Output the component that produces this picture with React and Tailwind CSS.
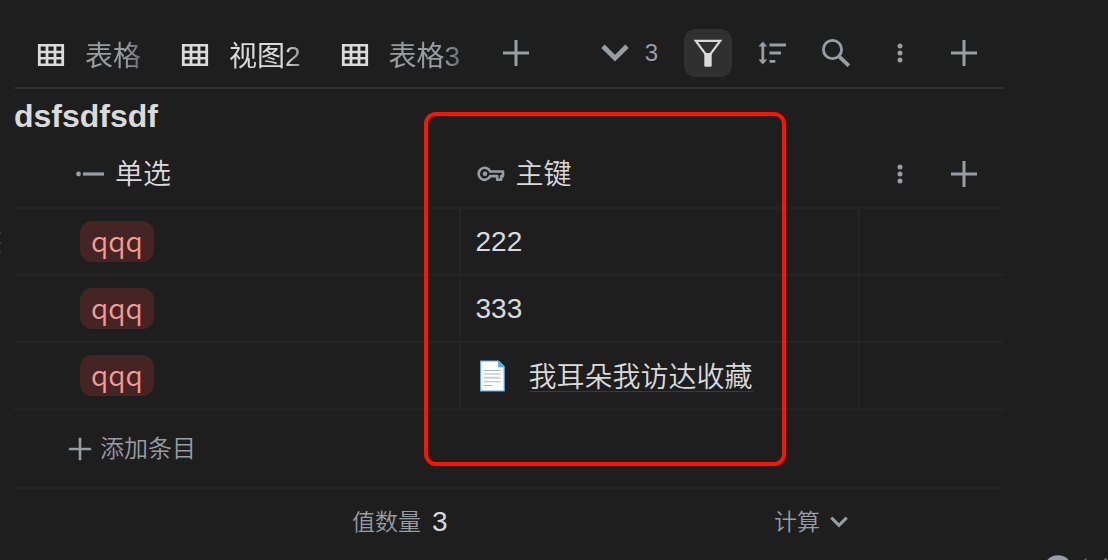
import React from "react";

const TABS = [
  { name: "表格", active: false },
  { name: "视图2", active: true },
  { name: "表格3", active: false },
];

const ROWS = [
  { id: 1, tag: "qqq", key: "222", page: false },
  { id: 2, tag: "qqq", key: "333", page: false },
  { id: 3, tag: "qqq", key: "我耳朵我访达收藏", page: true },
];

function GridIcon() {
  return (
    <svg className="mb-1 h-6 w-7 shrink-0 text-[#dadada]" viewBox="0 0 28 24" fill="none" stroke="currentColor" aria-hidden="true">
      <path d="M1 2.3h26M1 9h26M1 15.3h26M1 21.7h26" strokeWidth="2.6" />
      <path d="M2.3 1v22M10 1v22M18 1v22M25.7 1v22" strokeWidth="2.8" />
    </svg>
  );
}

function PlusIcon({ className = "size-7" }) {
  return (
    <svg className={className} viewBox="0 0 28 28" fill="none" stroke="currentColor" strokeWidth="3" aria-hidden="true">
      <path d="M14 1v26M1 14h26" />
    </svg>
  );
}

function DotsIcon() {
  return (
    <svg className="size-6" viewBox="0 0 24 24" fill="currentColor" aria-hidden="true">
      <circle cx="12" cy="5" r="2.5" />
      <circle cx="12" cy="12" r="2.5" />
      <circle cx="12" cy="19" r="2.5" />
    </svg>
  );
}

function ChevronIcon({ className }) {
  return (
    <svg className={className} viewBox="0 0 28 18" fill="none" stroke="currentColor" strokeWidth="4.8" aria-hidden="true">
      <path d="M2 2.2 14 14.2 26 2.2" />
    </svg>
  );
}

function FilterIcon() {
  return (
    <svg className="size-8" viewBox="0 0 32 32" aria-hidden="true">
      <path d="M3.8 3.8h24.4L18.2 17.4h-4.4z" fill="none" stroke="currentColor" strokeWidth="2.2" />
      <path d="M12.3 16h7.4v12.6a1.2 1.2 0 0 1-1.2 1.2h-5a1.2 1.2 0 0 1-1.2-1.2z" fill="currentColor" />
    </svg>
  );
}

function SortIcon() {
  return (
    <svg className="h-6 w-7" viewBox="0 0 28 24" aria-hidden="true">
      <path d="M4.8 3v18" stroke="currentColor" strokeWidth="2.8" />
      <path d="M4.8 .6 9.2 5.4H.4zM4.8 23.4.4 18.6H9.2z" fill="currentColor" />
      <path d="M11.5 4H28M11.5 12H23M11.5 20.3h5.8" stroke="currentColor" strokeWidth="2.8" />
    </svg>
  );
}

function SearchIcon() {
  return (
    <svg className="size-7" viewBox="0 0 28 28" fill="none" stroke="currentColor" aria-hidden="true">
      <circle cx="10.5" cy="10.5" r="9.1" strokeWidth="2.8" />
      <path d="m17.5 17.8 9.3 8.9" strokeWidth="3.8" />
    </svg>
  );
}

function SelectIcon() {
  return (
    <svg className="h-4 w-7 text-[#989da4]" viewBox="0 0 28 16" aria-hidden="true">
      <circle cx="2.5" cy="8" r="2.4" fill="currentColor" />
      <path d="M7 8h22" stroke="currentColor" strokeWidth="3.2" />
    </svg>
  );
}

function KeyIcon() {
  return (
    <svg className="h-4 w-7 text-[#989da4]" viewBox="0 0 28 16" fill="none" stroke="currentColor" aria-hidden="true">
      <path d="M13.2 5.5H26v4.6h-1.8v3.6h-4v-3.6h-7a6 6 0 1 1 0-4.6z" strokeWidth="2.6" strokeLinejoin="round" />
      <circle cx="8" cy="7.8" r="2.3" fill="currentColor" stroke="none" />
    </svg>
  );
}

function PageIcon() {
  return (
    <svg className="h-8 w-8 shrink-0" viewBox="-3 0 32 32" aria-hidden="true">
      <path d="M1.6 1h18l5.6 5.6V31H1.6z" fill="#fdfdfd" stroke="#64ace0" strokeWidth="1.2" />
      <path d="M19 1v6.2h6.2z" fill="#52b1ee" />
      <path d="M5 10.5h16.5M5 14h16.5M5 21.8h16.5M5 25.5h8" stroke="#a9b6bf" strokeWidth="1.1" />
      <path d="M5 17.8h16.5" stroke="#ccd2d7" strokeWidth="2" />
    </svg>
  );
}

function IconButton({ label, active = false, children }) {
  return (
    <button
      type="button"
      aria-label={label}
      className={
        active
          ? "flex size-12 items-center justify-center rounded-xl bg-[#303030] text-[#dadada]"
          : "flex size-12 items-center justify-center rounded-xl text-[#989da4]"
      }
    >
      {children}
    </button>
  );
}

export default function App() {
  return (
    <div className="relative min-h-screen overflow-hidden bg-[#1e1e1e] pr-26 pl-3.5 font-['Liberation_Sans','Noto_Sans_CJK_SC',sans-serif] text-[28px] leading-10 text-[#dadada]">
      <main className="relative">
        <header className="flex h-[89px] items-center border-b-2 border-[#2e2e2e] pt-[18px] pr-4 pl-[23px]">
          <nav className="flex items-center gap-10 pt-2">
            {TABS.map((tab) => (
              <button key={tab.name} type="button" className="flex items-center gap-5">
                <GridIcon />
                <span
                  className={
                    tab.active
                      ? "whitespace-nowrap text-[#dadada] [mask-image:linear-gradient(to_right,black_calc(100%-16px),#0009)]"
                      : "whitespace-nowrap text-[#989da4] [mask-image:linear-gradient(to_right,black_calc(100%-16px),#0009)]"
                  }
                >
                  {tab.name}
                </span>
              </button>
            ))}
          </nav>
          <div className="ml-8">
            <IconButton label="添加视图"><PlusIcon /></IconButton>
          </div>
          <div className="ml-auto flex items-center gap-4">
            <button type="button" className="mr-2.5 flex items-center gap-4 text-2xl text-[#989da4]">
              <ChevronIcon className="h-[18px] w-7" />
              3
            </button>
            <IconButton label="筛选" active><FilterIcon /></IconButton>
            <IconButton label="排序"><SortIcon /></IconButton>
            <IconButton label="搜索"><SearchIcon /></IconButton>
            <IconButton label="更多"><DotsIcon /></IconButton>
            <IconButton label="新建"><PlusIcon /></IconButton>
          </div>
        </header>

        <h1 className="pt-[7px] text-[32px] leading-10 font-bold">dsfsdfsdf</h1>

        <table className="w-full table-fixed border-collapse text-left">
          <colgroup>
            <col className="w-[45%]" />
            <col />
            <col className="w-[145px]" />
          </colgroup>
          <thead className="font-['Noto_Sans_CJK_SC',sans-serif]">
            <tr className="h-[72px] border-b-2 border-[#242424]">
              <th className="pt-1 pl-[62px] font-[350]">
                <span className="flex items-center gap-[11px]"><SelectIcon /><span className="pb-1">单选</span></span>
              </th>
              <th className="pt-1 pl-[17px] font-[350]">
                <span className="flex items-center gap-[11px]"><KeyIcon /><span className="pb-1">主键</span></span>
              </th>
              <th className="pt-1 pr-4">
                <div className="flex justify-end gap-4">
                  <IconButton label="列选项"><DotsIcon /></IconButton>
                  <IconButton label="添加列"><PlusIcon /></IconButton>
                </div>
              </th>
            </tr>
          </thead>
          <tbody>
            {ROWS.map((row) => (
              <tr key={row.id} className="h-[67px] border-b-2 border-[#242424]">
                <td className="border-r-2 border-[#242424] pl-[66px]">
                  <span className="flex h-[41px] w-fit items-center rounded-xl bg-[#442524] px-[11px] pb-1 font-['Noto_Sans_CJK_SC',sans-serif] font-[350] text-[#f99a94]">
                    {row.tag}
                  </span>
                </td>
                <td className="border-r-2 border-[#242424] pl-[15px]">
                  {row.page ? (
                    <span className="flex items-center gap-[21px]">
                      <PageIcon />
                      <a href="#page" className="border-b border-[#3a3a3a] font-['Noto_Sans_CJK_SC',sans-serif] leading-8 font-[350] whitespace-nowrap">{row.key}</a>
                    </span>
                  ) : (
                    row.key
                  )}
                </td>
                <td />
              </tr>
            ))}
          </tbody>
          <tfoot>
            <tr className="h-[79px] border-b-2 border-[#242424]">
              <td colSpan={3} className="pl-[54px]">
                <button type="button" className="flex items-center gap-2 font-['Noto_Sans_CJK_SC',sans-serif] text-2xl font-[350] text-[#989da4]">
                  <PlusIcon className="size-6" />
                  <span className="pb-1">添加条目</span>
                </button>
              </td>
            </tr>
            <tr className="h-[67px]">
              <td className="pr-3">
                <span className="flex items-center justify-end gap-[11px]">
                  <span className="pb-1 font-['Noto_Sans_CJK_SC',sans-serif] text-[23px] font-[350] text-[#989da4]">值数量</span>3
                </span>
              </td>
              <td className="pr-[11px]">
                <button type="button" className="ml-auto flex items-center gap-2.5 font-['Noto_Sans_CJK_SC',sans-serif] text-[23px] font-[350] text-[#989da4]">
                  <span className="pb-1">计算</span>
                  <ChevronIcon className="h-3 w-[18px]" />
                </button>
              </td>
              <td />
            </tr>
          </tfoot>
        </table>

        <div className="pointer-events-none absolute top-28 left-[410px] h-[354px] w-[362px] rounded-xl border-4 border-[#ff1200]" />
      </main>

      <svg className="absolute top-[230px] left-0 h-6 w-1 text-[#3a3a3a]" viewBox="0 0 4 24" fill="currentColor" aria-hidden="true">
        <circle cx="0" cy="3" r="1.2" />
        <circle cx="0" cy="13" r="1.2" />
        <circle cx="0" cy="22" r="1.2" />
      </svg>
      <svg className="pointer-events-none absolute top-[552px] right-0 h-2 w-16 text-[#989da4]" viewBox="0 0 64 8" fill="currentColor" aria-hidden="true">
        <circle cx="14" cy="17.6" r="14.4" />
        <path d="M40.5 6.5h2V8h-2zM60 6.5h3V8h-3z" opacity=".6" />
      </svg>
    </div>
  );
}
